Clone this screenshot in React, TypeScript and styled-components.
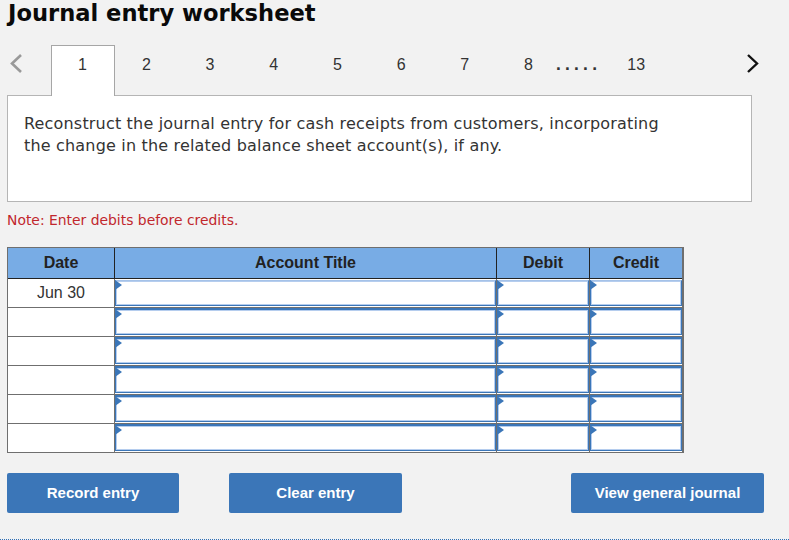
import { Fragment } from 'react';
import styled, { createGlobalStyle } from 'styled-components';

const GlobalStyle = createGlobalStyle`
  html, body {
    margin: 0;
    padding: 0;
    background: #f2f2f2;
  }
  body {
    font-family: "Liberation Sans", Arial, sans-serif;
    overflow: hidden;
  }
`;

const Page = styled.div`
  width: 789px;
  height: 540px;
  box-sizing: border-box;
  padding: 0 0 0 7px;
  display: flex;
  flex-direction: column;
  border-bottom: 1px dotted #2f6fb5;
`;

const Title = styled.h1`
  margin: 0 0 0 1px;
  height: 45px;
  font-family: "DejaVu Sans", Verdana, sans-serif;
  font-size: 22.6px;
  font-weight: 700;
  line-height: 26px;
  color: #0a0a0a;
`;

const TabRow = styled.div`
  display: flex;
  height: 50px;
  width: 760px;
  position: relative;
`;

const Arrow = styled.div`
  width: 44px;
  height: 38px;
  display: flex;
  align-items: center;
  svg { display: block; }
`;

const Tab = styled.div<{ $active?: boolean }>`
  width: ${p => (p.$active ? '64px' : '63.7px')};
  box-sizing: border-box;
  height: ${p => (p.$active ? '51px' : '39px')};
  display: flex;
  align-items: center;
  justify-content: center;
  padding-right: 1px;
  font-size: 16px;
  color: #333;
  background: ${p => (p.$active ? '#fff' : 'transparent')};
  border: ${p => (p.$active ? '1px solid #a6a6a6' : '0')};
  border-bottom: 0;
  ${p => p.$active && 'padding-bottom: 12px; position: relative; z-index: 1;'}
`;

const Dots = styled.div`
  width: 49px;
  height: 40px;
  margin-left: -5px;
  display: flex;
  align-items: center;
  justify-content: flex-start;
  font-family: "DejaVu Sans", Verdana, sans-serif;
  font-size: 14px;
  font-weight: 700;
  letter-spacing: 3.7px;
  color: #333;
`;

const NextArrow = styled(Arrow)`
  margin-left: auto;
  justify-content: flex-end;
  width: 20px;
  margin-right: 7px;
`;

const Panel = styled.div`
  width: 745px;
  height: 107px;
  box-sizing: border-box;
  background: #fff;
  border: 1px solid #b5b5b5;
  padding: 17px 16px;
  font-family: "DejaVu Sans", Verdana, sans-serif;
  font-size: 16px;
  letter-spacing: 0.18px;
  line-height: 22px;
  color: #333;
  white-space: nowrap;
`;

const Note = styled.div`
  margin-top: 9px;
  height: 36px;
  font-family: "DejaVu Sans", Verdana, sans-serif;
  font-size: 13.9px;
  line-height: 18px;
  color: #c1272d;
`;

const Grid = styled.div`
  display: grid;
  grid-template-columns: 106px 382px 93px 93px;
  grid-template-rows: 31px repeat(6, 29px);
  width: 677px;
  height: 206px;
  box-sizing: border-box;
  border: 1px solid #6f6f6f;
  border-right-width: 2px;
  border-bottom-width: 2px;
`;

const HeadCell = styled.div<{ $first?: boolean }>`
  background: #78ace5;
  display: flex;
  align-items: center;
  justify-content: center;
  font-size: 16px;
  font-weight: 700;
  color: #222;
  box-sizing: border-box;
  border-bottom: 1px solid #222;
  border-left: ${p => (p.$first ? '0' : '1px solid #222')};
`;

const DateCell = styled.div`
  background: #fff;
  display: flex;
  align-items: center;
  justify-content: center;
  font-size: 16px;
  color: #333;
  box-sizing: border-box;
  border-bottom: 1px solid #6f6f6f;
`;

const InputCell = styled.div`
  background: #fff;
  box-sizing: border-box;
  position: relative;
  border-left: 1px solid #6f6f6f;
  border-bottom: 1px solid #6f6f6f;
  display: flex;
`;

const EntryBox = styled.div<{ $first?: boolean }>`
  flex: 1;
  margin-bottom: 1px;
  box-sizing: border-box;
  background: #fff;
  border: 1px solid #3b76b8;
  border-top-width: 2px;
  ${p => p.$first && 'border-top-color: #a5c2e8; border-top-width: 1px; margin-top: 1px;'}
  box-shadow: inset 0 0 0 1px #b5cdee;
`;

const Marker = styled.span`
  position: absolute;
  left: 0;
  top: 1px;
  width: 0;
  height: 0;
  border-top: 5px solid transparent;
  border-bottom: 5px solid transparent;
  border-left: 7px solid #3b76b8;
`;

const Actions = styled.div`
  display: flex;
  margin-top: 20px;
`;

const ActionButton = styled.button<{ $width: number; $gap?: number }>`
  width: ${p => p.$width}px;
  margin-right: ${p => p.$gap ?? 0}px;
  height: 40px;
  border: 0;
  border-radius: 2px;
  background: #3b76b8;
  color: #fff;
  font-family: "Liberation Sans", Arial, sans-serif;
  font-size: 15px;
  font-weight: 700;
  padding: 0 0 2px;
`;

const pages = ['2', '3', '4', '5', '6', '7', '8'];
const rows = ['Jun 30', '', '', '', '', ''];

function Entry({ first }: { first: boolean }) {
  return (
    <InputCell>
      <EntryBox $first={first} />
      <Marker />
    </InputCell>
  );
}

export default function App() {
  return (
    <>
      <GlobalStyle />
      <Page>
        <Title>Journal entry worksheet</Title>
        <TabRow>
          <Arrow>
            <svg width="16" height="22" viewBox="0 0 16 22">
              <path d="M14 2 L5 10.5 L14 19" fill="none" stroke="#999" strokeWidth="2.6" />
            </svg>
          </Arrow>
          <Tab $active>1</Tab>
          {pages.map(n => <Tab key={n}>{n}</Tab>)}
          <Dots>.....</Dots>
          <Tab>13</Tab>
          <NextArrow>
            <svg width="14" height="22" viewBox="0 0 14 22">
              <path d="M2 2 L11 10.5 L2 19" fill="none" stroke="#111" strokeWidth="2.4" />
            </svg>
          </NextArrow>
        </TabRow>
        <Panel>
          Reconstruct the journal entry for cash receipts from customers, incorporating
          <br />
          the change in the related balance sheet account(s), if any.
        </Panel>
        <Note>Note: Enter debits before credits.</Note>
        <Grid>
          <HeadCell $first>Date</HeadCell>
          <HeadCell>Account Title</HeadCell>
          <HeadCell>Debit</HeadCell>
          <HeadCell>Credit</HeadCell>
          {rows.map((date, i) => (
            <Fragment key={i}>
              <DateCell>{date}</DateCell>
              <Entry first={i === 0} />
              <Entry first={i === 0} />
              <Entry first={i === 0} />
            </Fragment>
          ))}
        </Grid>
        <Actions>
          <ActionButton $width={172} $gap={50}>Record entry</ActionButton>
          <ActionButton $width={173} $gap={169}>Clear entry</ActionButton>
          <ActionButton $width={193}>View general journal</ActionButton>
        </Actions>
      </Page>
    </>
  );
}
